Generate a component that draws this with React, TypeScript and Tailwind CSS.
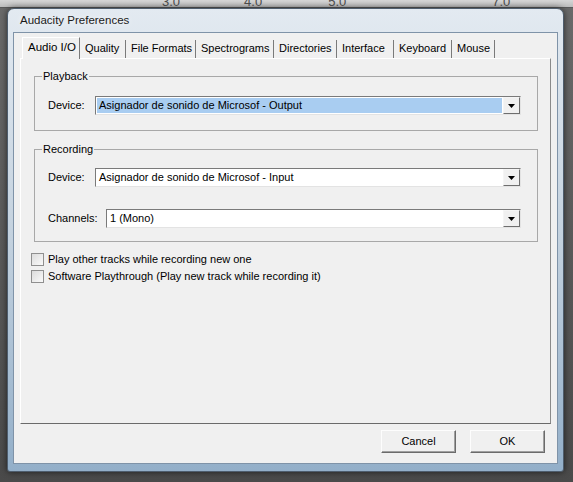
import React from "react";

// tab label, box width in px (measured off the separators)
const tabs: [string, number][] = [
  ["Quality", 46],
  ["File Formats", 70],
  ["Spectrograms", 78],
  ["Directories", 63],
  ["Interface", 57],
  ["Keyboard", 58],
  ["Mouse", 43],
];

function Combo({ value, active, className = "" }: { value: string; active?: boolean; className?: string }) {
  return (
    <div className={`flex h-[19px] border border-t-[#7a7a7a] border-l-[#7a7a7a] border-r-[#e3e3e3] border-b-[#e3e3e3] bg-white ${className}`}>
      <div className="flex flex-1 items-center p-[1px]">
        <div className={`flex h-full flex-1 items-center pl-[2px] ${active ? "bg-[#a9cdf1]" : ""}`}>{value}</div>
      </div>
      <div className="flex w-[17px] items-center justify-center border border-t-[#f5f5f5] border-l-[#f5f5f5] border-r-[#6e6e6e] border-b-[#6e6e6e] bg-[#f0f0f0]">
        <svg width="7" height="4" viewBox="0 0 7 4">
          <path d="M0 0h7L3.5 4z" fill="#000" />
        </svg>
      </div>
    </div>
  );
}

function Group({ title, children, className = "" }: { title: string; children: React.ReactNode; className?: string }) {
  return (
    <fieldset className={`border border-[#a8a8a8] ${className}`}>
      <legend className="ml-[7px] px-[1px] leading-[12px]">{title}</legend>
      {children}
    </fieldset>
  );
}

function Check({ label }: { label: string }) {
  return (
    <div className="flex h-[17px] items-center">
      <span className="h-[13px] w-[13px] border border-[#8f8f8f] bg-gradient-to-br from-[#dcdcdc] to-[#fafafa]" />
      <span className="ml-[4px]">{label}</span>
    </div>
  );
}

function Button({ label }: { label: string }) {
  return (
    <div className="flex h-[23px] w-[75px] items-center justify-center border border-t-[#fdfdfd] border-l-[#fdfdfd] border-r-[#6b6b6b] border-b-[#6b6b6b] bg-[#f0f0f0] shadow-[inset_-1px_-1px_0_#a0a0a0]">
      {label}
    </div>
  );
}

export default function App() {
  return (
    <div className="h-[482px] w-[573px] overflow-hidden bg-gradient-to-b from-[#6a6a6a] to-[#4a4a4a] font-['Liberation_Sans',Arial,sans-serif] text-[11px] text-black">
      <div className="flex h-[8px] overflow-hidden border-b border-[#5a5a5a] bg-gradient-to-b from-[#d6d6d6] to-[#bdbdbd] text-[13px] leading-[8px] text-[#4b4b4b]">
        <span className="ml-[162px] mt-[-2px]">3.0</span>
        <span className="ml-[64px] mt-[-2px]">4.0</span>
        <span className="ml-[66px] mt-[-2px]">5.0</span>
        <span className="ml-[146px] mt-[-2px]">7.0</span>
      </div>
      <div className="ml-[7px] flex h-[464px] w-[557px] flex-col rounded-t-[7px] rounded-b-[3px] border border-[#4e5d6d] bg-gradient-to-b from-[#e3eaf1] via-[#c3d1de] to-[#93afc9] px-[5px] pb-[7px] shadow-[0_0_6px_rgba(0,0,0,0.6)]">
        <div className="flex h-[23px] items-center pl-[7px] text-[11.5px] text-[#1a1a1a] [text-shadow:0_0_6px_#fff]">
          Audacity Preferences
        </div>
        <div className="flex flex-1 flex-col border border-[#7f93a8] bg-[#f0f0f0] pl-[6px] pr-[4px] pt-[4px]">
          <div className="flex h-[21px] items-end pl-[2px]">
            <div className="relative z-10 mb-[-1px] flex h-[22px] w-[58px] items-center border border-b-0 border-l-[#ffffff] border-t-[#ffffff] border-r-[#7a7a7a] bg-[#f0f0f0] pb-[2px] pl-[5px] text-[11.5px]">
              Audio I/O
            </div>
            {tabs.map(([t, w]) => (
              <div
                key={t}
                style={{ width: w }}
                className="flex h-[18px] shrink-0 items-center border-r border-[#7a7a7a] pb-[1px] pl-[5px] text-[11px]"
              >
                {t}
              </div>
            ))}
          </div>
          <div className="flex h-[366px] w-[531px] flex-col border border-l-[#ffffff] border-t-[#ffffff] border-r-[#8a8a8a] border-b-[#6a6a6a] px-[13px] pt-[11px]">
            <Group title="Playback" className="h-[61px] w-[504px]">
              <div className="flex items-center pl-[13px] pt-[14px]">
                <span className="w-[47px]">Device:</span>
                <Combo value="Asignador de sonido de Microsof - Output" active className="w-[426px]" />
              </div>
            </Group>
            <Group title="Recording" className="mt-[12px] h-[99px] w-[504px]">
              <div className="flex items-center pl-[13px] pt-[13px]">
                <span className="w-[47px]">Device:</span>
                <Combo value="Asignador de sonido de Microsof - Input" className="w-[426px]" />
              </div>
              <div className="mt-[22px] flex items-center pl-[13px]">
                <span className="w-[58px]">Channels:</span>
                <Combo value="1 (Mono)" className="w-[415px]" />
              </div>
            </Group>
            <div className="ml-[-3px] mt-[9px] flex flex-col">
              <Check label="Play other tracks while recording new one" />
              <Check label="Software Playthrough (Play new track while recording it)" />
            </div>
          </div>
          <div className="flex justify-end gap-[14px] pr-[8px] pt-[6px]">
            <Button label="Cancel" />
            <Button label="OK" />
          </div>
        </div>
      </div>
    </div>
  );
}
